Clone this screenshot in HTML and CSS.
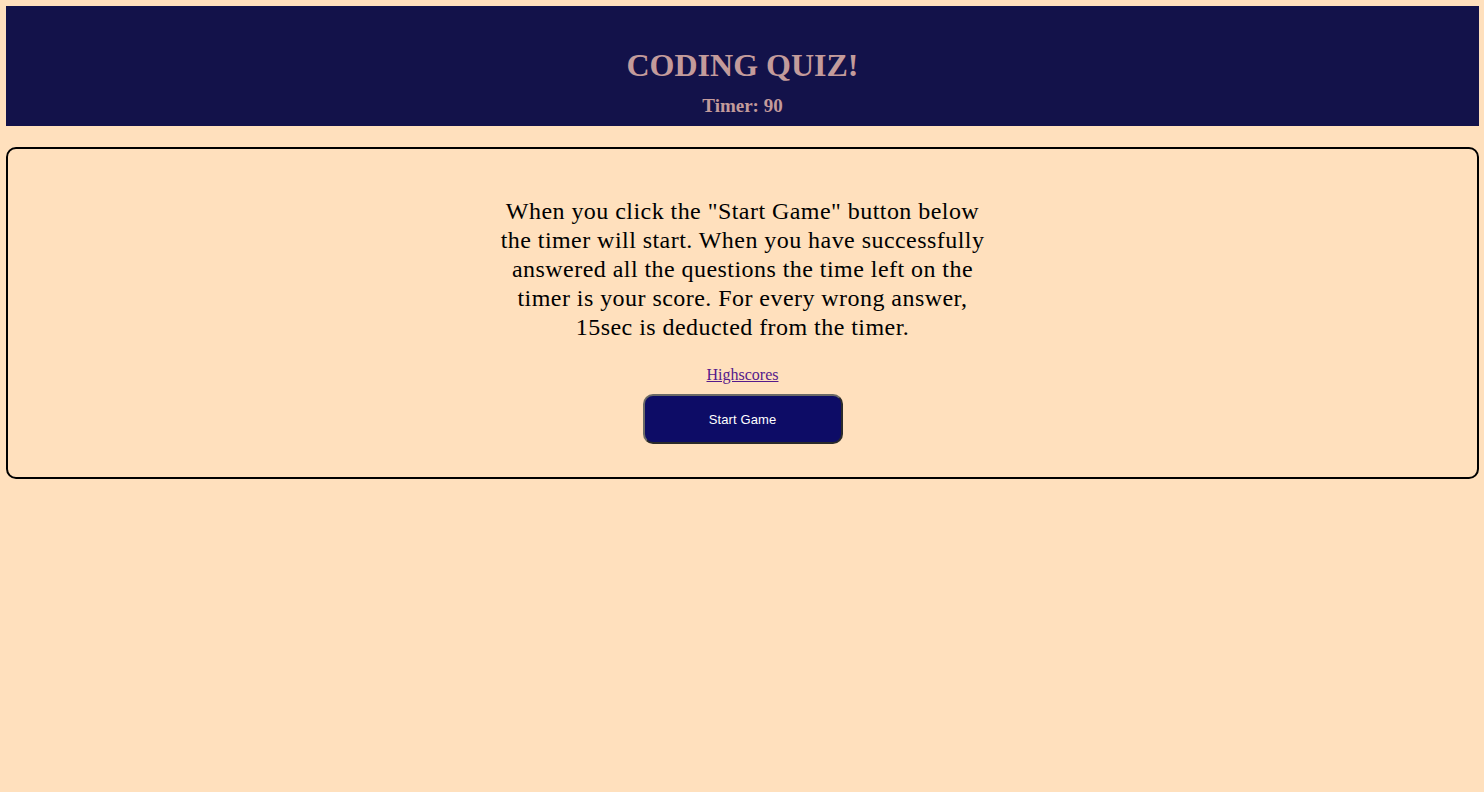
FILE: index.html
```html
<!DOCTYPE html>
<html>
<head>
<meta charset="utf-8">
<title>Coding Quiz</title>
<link rel="stylesheet" href="styles.css">
</head>
<body>
<header class="header">
  <h1 class="title">CODING QUIZ!</h1>
  <div class="timer">Timer: 90</div>
</header>
<main class="card">
  <p class="intro">When you click the "Start Game" button below the timer will start. When you have successfully answered all the questions the time left on the timer is your score. For every wrong answer, 15sec is deducted from the timer.</p>
  <a class="link" href="#">Highscores</a>
  <button class="start">Start Game</button>
</main>
</body>
</html>
```

FILE: styles.css
```css
html, body {
  background: #ffe0bd;
}
body {
  margin: 6px 5px 6px 6px;
  font-family: "Liberation Serif", "Times New Roman", serif;
}
.header {
  background: #13124a;
  height: 120px;
  box-sizing: border-box;
  padding-top: 39px;
  display: flex;
  flex-direction: column;
  align-items: center;
  color: #c39b9b;
}
.title {
  margin: 0;
  font-size: 32px;
  line-height: 40px;
  font-weight: bold;
}
.timer {
  margin-top: 9px;
  font-size: 19px;
  line-height: 23px;
  font-weight: bold;
}
.card {
  margin-top: 21px;
  border: 2px solid #000;
  border-radius: 10px;
  height: 332px;
  box-sizing: border-box;
  display: flex;
  flex-direction: column;
  align-items: center;
  padding-top: 48px;
}
.intro {
  margin: 0;
  width: 490px;
  text-align: center;
  font-size: 24px;
  line-height: 29px;
  letter-spacing: 0.45px;
}
.link {
  margin-top: 24px;
  font-size: 16px;
  line-height: 18px;
  color: #551a8b;
}
.start {
  margin-top: 10px;
  width: 200px;
  height: 50px;
  background: #0d0c66;
  color: #fff;
  border: 2px solid #6b6a66;
  border-bottom-color: #2a2a2a;
  border-right-color: #2a2a2a;
  border-radius: 10px;
  font-family: "Liberation Sans", Arial, sans-serif;
  font-size: 13px;
  letter-spacing: 0.1px;
}
```
